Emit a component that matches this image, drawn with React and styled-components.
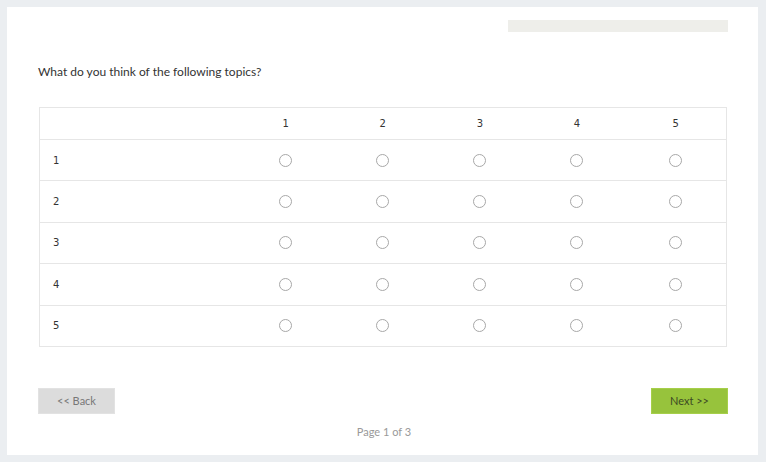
import React from 'react';
import styled, { createGlobalStyle } from 'styled-components';

const GlobalStyle = createGlobalStyle`
  body {
    margin: 0;
    background: #ebeef1;
    font-family: Lato, "Open Sans", sans-serif;
  }
`;

const rows = ['1', '2', '3', '4', '5'];
const cols = ['1', '2', '3', '4', '5'];

const App = () => (
  <>
    <GlobalStyle />
    <Page>
      <Card>
        <ProgressRow>
          <ProgressBar />
        </ProgressRow>
        <Question>What do you think of the following topics?</Question>
        <Matrix>
          <thead>
            <tr>
              <HeadCell />
              {cols.map((c) => (
                <HeadCell key={c}>{c}</HeadCell>
              ))}
            </tr>
          </thead>
          <tbody>
            {rows.map((r) => (
              <tr key={r}>
                <LabelCell>{r}</LabelCell>
                {cols.map((c) => (
                  <RadioCell key={c}>
                    <Radio />
                  </RadioCell>
                ))}
              </tr>
            ))}
          </tbody>
        </Matrix>
        <Footer>
          <NavButton>&lt;&lt; Back</NavButton>
          <NavButton primary>Next &gt;&gt;</NavButton>
        </Footer>
        <PageInfo>Page 1 of 3</PageInfo>
      </Card>
    </Page>
  </>
);

const Page = styled.div`
  padding: 7px 8px 7px 7px;
  height: 462px;
  box-sizing: border-box;
`;

const Card = styled.div`
  background: #fff;
  height: 448px;
  padding: 13px 30px 0 31px;
  box-sizing: border-box;
`;

const ProgressRow = styled.div`
  display: flex;
  justify-content: flex-end;
`;

const ProgressBar = styled.div`
  width: 220px;
  height: 12px;
  background: #eeeeea;
`;

const Question = styled.p`
  margin: 32px 0 0;
  font-size: 12px;
  line-height: 16px;
  color: #333;
`;

const Matrix = styled.table`
  margin: 27px 0 0 1px;
  width: 688px;
  border-collapse: collapse;
  border: 1px solid #e6e6e6;
  font-family: "DejaVu Sans", Verdana, sans-serif;
  font-size: 10px;
  color: #333;
`;

const HeadCell = styled.th`
  height: 31px;
  padding: 0;
  font-weight: normal;
  text-align: center;
  &:first-child {
    width: 197px;
  }
`;

const LabelCell = styled.td`
  height: 40.4px;
  padding: 0 0 0 13px;
  border-top: 1px solid #e6e6e6;
`;

const RadioCell = styled.td`
  height: 40.4px;
  padding: 0;
  text-align: center;
  border-top: 1px solid #e6e6e6;
`;

const Radio = styled.span`
  display: inline-block;
  width: 11px;
  height: 11px;
  border: 1px solid #a8a8a8;
  border-radius: 50%;
  vertical-align: middle;
`;

const Footer = styled.div`
  display: flex;
  justify-content: space-between;
  margin-top: 41px;
`;

const NavButton = styled.button`
  width: 77px;
  height: 26px;
  border: 1px solid ${(p) => (p.primary ? '#a6cf4a' : '#e2e2e2')};
  background: ${(p) => (p.primary ? '#97c33c' : '#dcdcdc')};
  color: ${(p) => (p.primary ? '#3d4a24' : '#777')};
  font-family: Lato, "Open Sans", sans-serif;
  font-size: 11px;
  padding: 0;
  cursor: pointer;
`;

const PageInfo = styled.div`
  margin-top: 11px;
  text-align: center;
  font-size: 11px;
  color: #999;
  padding-left: 2px;
`;

export default App;
